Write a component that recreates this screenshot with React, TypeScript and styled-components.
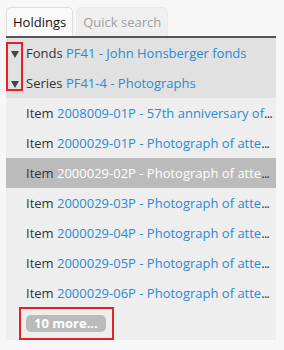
import React from "react";
import styled, { createGlobalStyle } from "styled-components";

const Global = createGlobalStyle`
  html, body { margin: 0; padding: 0; background: #f7f7f7; }
  body { font-family: "Open Sans", "Noto Sans", sans-serif; font-size: 13px; }
`;

const Wrap = styled.div`
  width: 270px;
  padding: 7px 0 0 6px;
`;

const TabBar = styled.div`
  display: flex;
  gap: 3px;
  align-items: flex-end;
`;

const Tab = styled.div<{ $active?: boolean }>`
  height: 29px;
  box-sizing: border-box;
  padding: 0 6px;
  display: flex;
  align-items: center;
  border: 1px solid ${(p) => (p.$active ? "#dddddd" : "#eaeaea")};
  border-bottom: none;
  border-radius: 5px 5px 0 0;
  background: ${(p) => (p.$active ? "#fafafa" : "#efefef")};
  color: ${(p) => (p.$active ? "#111" : "#a0a0a0")};
`;

const Panel = styled.div`
  border-top: 2px solid #555;
  background: #eeeeee;
`;

const Header = styled.div`
  background: #e1e1e1;
`;

const Row = styled.div<{ $selected?: boolean }>`
  position: relative;
  height: 30px;
  line-height: 30px;
  padding: 0 5px 0 20px;
  color: #333;
  white-space: nowrap;
  overflow: hidden;
  background: ${(p) => (p.$selected ? "#bbbbbb" : "transparent")};
`;

const Toggle = styled.span`
  position: absolute;
  left: 5px;
  top: 13px;
  width: 0;
  height: 0;
  border-left: 4.5px solid transparent;
  border-right: 4.5px solid transparent;
  border-top: 7px solid #444;
`;

const Link = styled.span<{ $selected?: boolean }>`
  color: ${(p) => (p.$selected ? "#ffffff" : "#2a8ad4")};
`;

const Dots = styled.span`
  color: #333;
  letter-spacing: -0.7px;
`;

const Footer = styled.div`
  padding: 0 0 0 13px;
  height: 32px;
`;

const Highlight = styled.div`
  display: inline-block;
  border: 2px solid #e5202a;
  padding: 6px 6px 6px 5px;
  margin-top: -1px;
`;

const MoreButton = styled.span`
  display: block;
  background: #bbbbbb;
  color: #fff;
  font-weight: bold;
  font-size: 13px;
  height: 17px;
  line-height: 17px;
  padding: 0 8px;
  border-radius: 5px;
`;

const ToggleBox = styled.div`
  position: absolute;
  left: 0;
  top: 4px;
  width: 13px;
  height: 45px;
  border: 2px solid #e5202a;
`;

const HeaderWrap = styled.div`
  position: relative;
`;

const items = [
  ["2008009-01P", "57th anniversary of"],
  ["2000029-01P", "Photograph of atte"],
  ["2000029-02P", "Photograph of atte"],
  ["2000029-03P", "Photograph of atte"],
  ["2000029-04P", "Photograph of atte"],
  ["2000029-05P", "Photograph of atte"],
  ["2000029-06P", "Photograph of atte"],
];

export default function App() {
  return (
    <>
      <Global />
      <Wrap>
        <TabBar>
          <Tab $active>Holdings</Tab>
          <Tab>Quick search</Tab>
        </TabBar>
        <Panel>
          <HeaderWrap>
            <Header>
              <Row>
                <Toggle />
                Fonds <Link>PF41 - John Honsberger fonds</Link>
              </Row>
              <Row>
                <Toggle />
                Series <Link>PF41-4 - Photographs</Link>
              </Row>
            </Header>
            <ToggleBox />
          </HeaderWrap>
          {items.map(([id, title], i) => (
            <Row key={id} $selected={i === 2}>
              Item{" "}
              <Link $selected={i === 2}>
                {id} - {title}
              </Link>
              <Dots>...</Dots>
            </Row>
          ))}
          <Footer>
            <Highlight>
              <MoreButton>10 more...</MoreButton>
            </Highlight>
          </Footer>
        </Panel>
      </Wrap>
    </>
  );
}
